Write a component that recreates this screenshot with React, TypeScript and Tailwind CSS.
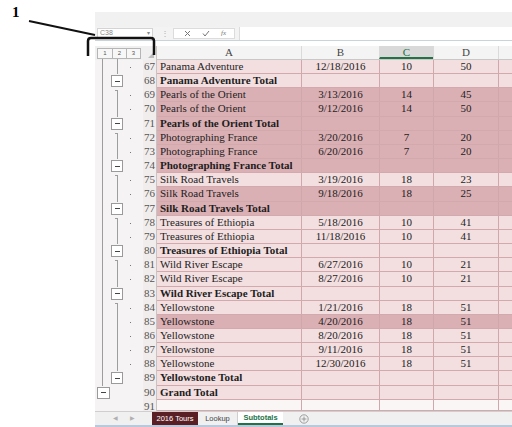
import React from 'react';

type Tone = 'light' | 'dark' | 'white';
type Kind = 'detail' | 'total' | 'grand' | 'empty';

interface Row {
  n: number;
  a: string;
  b?: string;
  c?: string;
  d?: string;
  tone: Tone;
  kind: Kind;
  first?: boolean;
}

const rows: Row[] = [
  { n: 67, a: 'Panama Adventure', b: '12/18/2016', c: '10', d: '50', tone: 'light', kind: 'detail', first: true },
  { n: 68, a: 'Panama Adventure Total', tone: 'light', kind: 'total' },
  { n: 69, a: 'Pearls of the Orient', b: '3/13/2016', c: '14', d: '45', tone: 'dark', kind: 'detail', first: true },
  { n: 70, a: 'Pearls of the Orient', b: '9/12/2016', c: '14', d: '50', tone: 'dark', kind: 'detail' },
  { n: 71, a: 'Pearls of the Orient Total', tone: 'dark', kind: 'total' },
  { n: 72, a: 'Photographing France', b: '3/20/2016', c: '7', d: '20', tone: 'dark', kind: 'detail', first: true },
  { n: 73, a: 'Photographing France', b: '6/20/2016', c: '7', d: '20', tone: 'dark', kind: 'detail' },
  { n: 74, a: 'Photographing France Total', tone: 'dark', kind: 'total' },
  { n: 75, a: 'Silk Road Travels', b: '3/19/2016', c: '18', d: '23', tone: 'light', kind: 'detail', first: true },
  { n: 76, a: 'Silk Road Travels', b: '9/18/2016', c: '18', d: '25', tone: 'dark', kind: 'detail' },
  { n: 77, a: 'Silk Road Travels Total', tone: 'dark', kind: 'total' },
  { n: 78, a: 'Treasures of Ethiopia', b: '5/18/2016', c: '10', d: '41', tone: 'light', kind: 'detail', first: true },
  { n: 79, a: 'Treasures of Ethiopia', b: '11/18/2016', c: '10', d: '41', tone: 'light', kind: 'detail' },
  { n: 80, a: 'Treasures of Ethiopia Total', tone: 'light', kind: 'total' },
  { n: 81, a: 'Wild River Escape', b: '6/27/2016', c: '10', d: '21', tone: 'light', kind: 'detail', first: true },
  { n: 82, a: 'Wild River Escape', b: '8/27/2016', c: '10', d: '21', tone: 'light', kind: 'detail' },
  { n: 83, a: 'Wild River Escape Total', tone: 'light', kind: 'total' },
  { n: 84, a: 'Yellowstone', b: '1/21/2016', c: '18', d: '51', tone: 'light', kind: 'detail', first: true },
  { n: 85, a: 'Yellowstone', b: '4/20/2016', c: '18', d: '51', tone: 'dark', kind: 'detail' },
  { n: 86, a: 'Yellowstone', b: '8/20/2016', c: '18', d: '51', tone: 'light', kind: 'detail' },
  { n: 87, a: 'Yellowstone', b: '9/11/2016', c: '18', d: '51', tone: 'light', kind: 'detail' },
  { n: 88, a: 'Yellowstone', b: '12/30/2016', c: '18', d: '51', tone: 'light', kind: 'detail' },
  { n: 89, a: 'Yellowstone Total', tone: 'light', kind: 'total' },
  { n: 90, a: 'Grand Total', tone: 'light', kind: 'grand' },
  { n: 91, a: '', tone: 'white', kind: 'empty' },
];

function MinusBox({ className }: { className: string }) {
  return (
    <div
      className={`absolute top-[1px] h-[12px] bg-white border border-[#9a9a9a] flex items-center justify-center ${className}`}
    >
      <div className="w-[5px] h-[1px] bg-[#444]" />
    </div>
  );
}

function Outline({ row }: { row: Row }) {
  return (
    <div className="relative w-[48px] h-full shrink-0 bg-[#f5f3f3]">
      {row.kind !== 'grand' && row.kind !== 'empty' && (
        <div className="absolute left-[7px] top-0 bottom-0 w-px bg-[#9d9d9d]" />
      )}
      {row.kind === 'grand' && <MinusBox className="left-[2px] w-[13px]" />}
      {row.kind === 'detail' && (
        <>
          <div className={`absolute left-[22px] bottom-0 w-px bg-[#9d9d9d] ${row.first && row.n !== 67 ? 'top-[2px]' : 'top-0'}`} />
          {row.first && row.n !== 67 && <div className="absolute left-[20px] top-[2px] w-[3px] h-px bg-[#9d9d9d]" />}
          <div className="absolute left-[35px] top-[7px] w-px h-px bg-[#777]" />
        </>
      )}
      {row.kind === 'total' && <MinusBox className="left-[16px] w-[12px]" />}
    </div>
  );
}

const toneBg: Record<Tone, string> = {
  light: 'bg-[#f3dfe0]',
  dark: 'bg-[#dbb0b4]',
  white: 'bg-[#fbf6f6]',
};

function DataRow({ row }: { row: Row }) {
  const bold = row.kind === 'total' || row.kind === 'grand';
  const last = row.kind === 'empty';
  return (
    <div className={`flex shrink-0 ${last ? 'h-[11px] leading-[12px]' : 'h-[14.17px] leading-[13px]'}`}>
      <Outline row={row} />
      <div className="w-[14px] shrink-0 text-right pr-[1px] text-[#555] text-[11px] bg-[#f1eded] border-r border-[#c9c4c4]">
        {row.n}
      </div>
      <div className={`flex flex-1 ${toneBg[row.tone]} border-b border-[#d2a9ac] text-[#1d1d1d] text-[11px]`}>
        <div className={`w-[144px] shrink-0 pl-[3px] whitespace-nowrap ${bold ? 'font-bold' : ''}`}>{row.a}</div>
        <div className="w-[78px] shrink-0 text-center border-l border-[#d0a7aa]">{row.b}</div>
        <div className="w-[54px] shrink-0 text-center border-l border-[#d0a7aa]">{row.c}</div>
        <div className="w-[65px] shrink-0 text-center border-l border-[#d0a7aa]">{row.d}</div>
        <div className="flex-1 border-l border-[#d0a7aa]" />
      </div>
    </div>
  );
}

function Annotation() {
  return (
    <>
      <div className="absolute left-[12px] top-[5px] text-[15px] font-bold text-black leading-none">1</div>
      <svg className="absolute left-0 top-0" width="200" height="70" viewBox="0 0 200 70">
        <line x1="29" y1="21" x2="95" y2="35" stroke="#111" strokeWidth="2" />
        <path d="M88 56 L88 41 Q88 38 91 38 L151 38 Q154 38 154 41 L154 55" fill="none" stroke="#111" strokeWidth="2.5" />
      </svg>
    </>
  );
}

export default function App() {
  return (
    <div className="relative w-[512px] h-[427px] bg-white overflow-hidden font-['Liberation_Serif',serif]">
      <div className="absolute inset-0 pl-[95px] pt-[12px] flex flex-col">
        {/* ribbon edge */}
        <div className="h-[15px] bg-[#f1f1f1] shrink-0" />
        {/* formula bar */}
        <div className="h-[14px] flex items-center bg-[#f3f3f3] border-b border-[#c9d3da] shrink-0 font-['Liberation_Sans',sans-serif]">
          <div className="ml-[2px] w-[56px] h-[11px] bg-white border border-[#d4d4d4] flex items-center justify-between px-[2px] text-[7px] text-[#888]">
            <span>C38</span>
            <span className="text-[6px]">▾</span>
          </div>
          <div className="ml-[8px] text-[8px] text-[#aaa] leading-none">⋮</div>
          <div className="ml-[4px] w-[62px] h-[11px] bg-white border border-[#dcdcdc] flex items-center text-[#777]">
            <svg className="ml-[10px]" width="7" height="7" viewBox="0 0 7 7">
              <path d="M1 1 L6 6 M6 1 L1 6" stroke="#777" strokeWidth="1" />
            </svg>
            <svg className="ml-[11px]" width="8" height="7" viewBox="0 0 8 7">
              <path d="M1 3.5 L3 6 L7 1" stroke="#777" strokeWidth="1" fill="none" />
            </svg>
            <span className="ml-[11px] text-[7px] italic font-['Liberation_Serif',serif]">fx</span>
          </div>
          <div className="ml-[4px] flex-1 h-[13px] bg-white border-l border-[#dcdcdc]" />
        </div>
        <div className="h-[5px] shrink-0 bg-white" />
        {/* column headers */}
        <div className="flex h-[14px] shrink-0 text-[11px] leading-[13px] text-[#444]">
          <div className="relative w-[48px] shrink-0 bg-[#f1f0f0]">
            <div className="absolute left-[2px] top-[2px] flex h-[11px] border border-[#b5b5b5] bg-[#f7f7f7] text-[6px] text-[#555] font-['Liberation_Sans',sans-serif]">
              {['1', '2', '3'].map((l, i) => (
                <div key={l} className={`w-[14px] flex items-center justify-center ${i > 0 ? 'border-l border-[#b5b5b5]' : ''}`}>
                  {l}
                </div>
              ))}
            </div>
            <div className="absolute left-[7px] top-[13px] bottom-0 w-px bg-[#9d9d9d]" />
            <div className="absolute left-[22px] top-[13px] bottom-0 w-px bg-[#9d9d9d]" />
          </div>
          <div className="relative w-[14px] shrink-0 bg-[#f1f0f0] border-r border-[#c9c4c4]">
            <div className="absolute right-[2px] bottom-[2px] w-0 h-0 border-l-[6px] border-l-transparent border-b-[6px] border-b-[#bdbdbd]" />
          </div>
          <div className="flex flex-1 bg-[#f4f4f4] border-b border-[#c8c8c8]">
            <div className="w-[144px] shrink-0 text-center">A</div>
            <div className="w-[78px] shrink-0 text-center border-l border-[#dadada]">B</div>
            <div className="w-[54px] shrink-0 text-center border-l border-[#dadada] bg-[#d9d9d9] text-[#217346] border-b-2 border-b-[#217346]">C</div>
            <div className="w-[65px] shrink-0 text-center border-l border-[#dadada]">D</div>
            <div className="flex-1 border-l border-[#dadada]" />
          </div>
        </div>
        {/* grid */}
        <div className="h-[351px] overflow-hidden flex flex-col shrink-0">
          {rows.map((r) => (
            <DataRow key={r.n} row={r} />
          ))}
        </div>
        {/* sheet tabs */}
        <div className="flex-1 flex items-stretch bg-[#f0f0f0] border-t border-[#cfcfcf] border-b-2 border-b-[#b9c9dd] font-['Liberation_Sans',sans-serif] text-[7.5px]">
          <div className="w-[57px] flex items-center justify-center gap-[12px] text-[#b0b0b0] text-[6px]">
            <span>◀</span>
            <span>▶</span>
          </div>
          <div className="w-[46px] bg-[#5a1f24] text-white flex items-center justify-center">2016 Tours</div>
          <div className="w-[40px] text-[#444] flex items-center justify-center border-r border-[#cfcfcf]">Lookup</div>
          <div className="w-[45px] bg-white text-[#217346] font-bold flex items-center justify-center border-b-2 border-[#217346]">
            Subtotals
          </div>
          <div className="ml-[16px] flex items-center text-[#777]">
            <svg width="10" height="10" viewBox="0 0 10 10">
              <circle cx="5" cy="5" r="4.2" fill="none" stroke="#888" strokeWidth="0.8" />
              <path d="M5 2.6 V7.4 M2.6 5 H7.4" stroke="#888" strokeWidth="0.8" />
            </svg>
          </div>
        </div>
      </div>
      <Annotation />
    </div>
  );
}
